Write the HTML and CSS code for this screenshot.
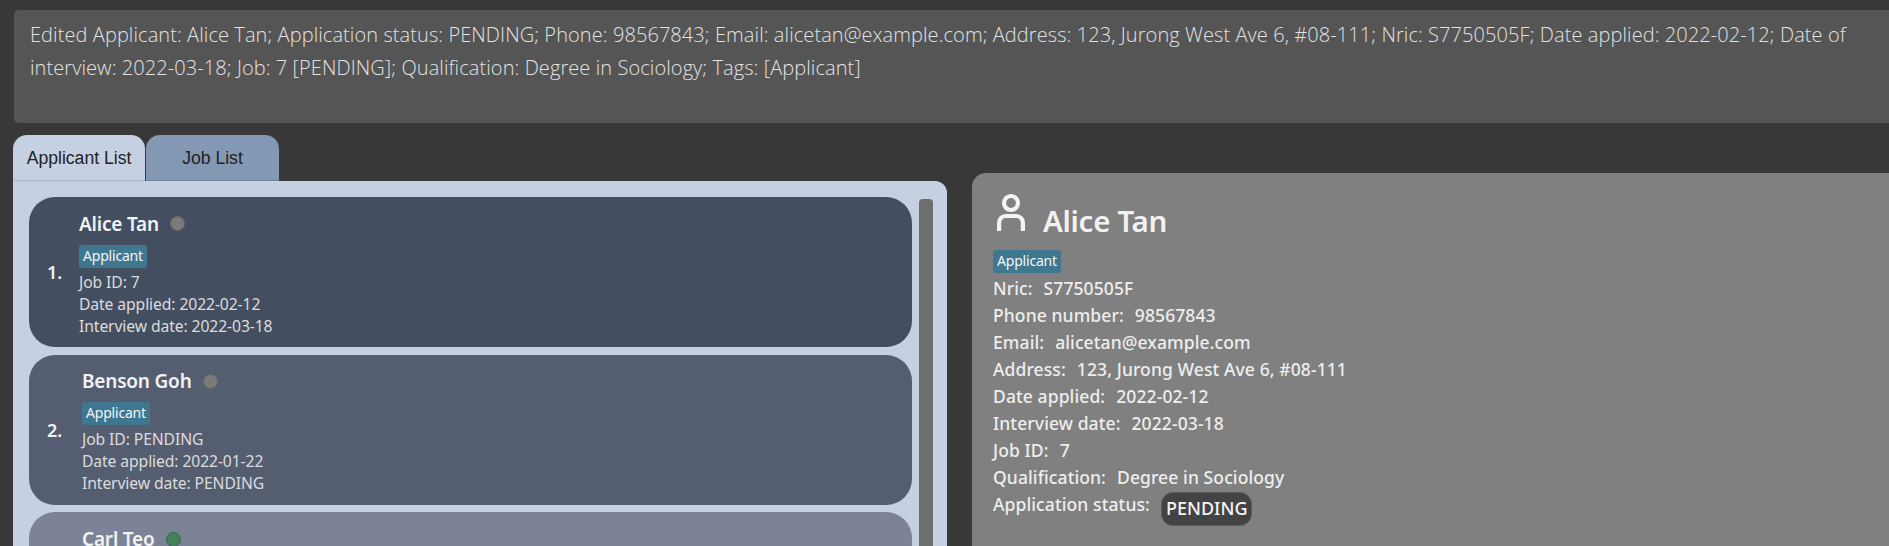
FILE: index.html
```html
<!DOCTYPE html>
<html lang="en">
<head>
<meta charset="utf-8">
<title>Applicant List</title>
<link rel="stylesheet" href="styles.css">
</head>
<body>
<div class="app">
  <div class="result">Edited Applicant: Alice Tan; Application status: PENDING; Phone: 98567843; Email: alicetan@example.com; Address: 123, Jurong West Ave 6, #08-111; Nric: S7750505F; Date applied: 2022-02-12; Date of interview: 2022-03-18; Job: 7 [PENDING]; Qualification: Degree in Sociology; Tags: [Applicant]</div>
  <div class="main">
    <div class="left">
      <div class="tabs">
        <div class="tab tab-active">Applicant List</div>
        <div class="tab">Job List</div>
      </div>
      <div class="panel">
        <div class="cards">
          <div class="card card-a">
            <div class="index">1.</div>
            <div class="info">
              <div class="name-row"><span class="name">Alice Tan</span><span class="dot dot-grey"></span></div>
              <span class="tag">Applicant</span>
              <div class="line">Job ID: 7</div>
              <div class="line">Date applied: 2022-02-12</div>
              <div class="line">Interview date: 2022-03-18</div>
            </div>
          </div>
          <div class="card card-b">
            <div class="index">2.</div>
            <div class="info">
              <div class="name-row"><span class="name">Benson Goh</span><span class="dot dot-grey"></span></div>
              <span class="tag">Applicant</span>
              <div class="line">Job ID: PENDING</div>
              <div class="line">Date applied: 2022-01-22</div>
              <div class="line">Interview date: PENDING</div>
            </div>
          </div>
          <div class="card card-c">
            <div class="index"></div>
            <div class="info">
              <div class="name-row"><span class="name">Carl Teo</span><span class="dot dot-green"></span></div>
            </div>
          </div>
        </div>
        <div class="scrollbar"></div>
      </div>
    </div>
    <div class="detail">
      <div class="detail-head">
        <svg class="person" width="28" height="38" viewBox="0 0 28 38" fill="none" stroke="#f4f4f4" stroke-width="4.200">
          <circle cx="14" cy="10" r="7"></circle>
          <path d="M2.100 38V29.500a6.500 6.500 0 0 1 6.500-6.500h10.800a6.500 6.500 0 0 1 6.500 6.500V38"></path>
        </svg>
        <span class="detail-name">Alice Tan</span>
      </div>
      <span class="tag tag-detail">Applicant</span>
      <div class="row"><span class="key">Nric:</span>S7750505F</div>
      <div class="row"><span class="key">Phone number:</span>98567843</div>
      <div class="row"><span class="key">Email:</span>alicetan@example.com</div>
      <div class="row"><span class="key">Address:</span>123, Jurong West Ave 6, #08-111</div>
      <div class="row"><span class="key">Date applied:</span>2022-02-12</div>
      <div class="row"><span class="key">Interview date:</span>2022-03-18</div>
      <div class="row"><span class="key">Job ID:</span>7</div>
      <div class="row"><span class="key">Qualification:</span>Degree in Sociology</div>
      <div class="status-row"><span class="status-key">Application status:</span><span class="status">PENDING</span></div>
    </div>
  </div>
</div>
</body>
</html>
```
FILE: styles.css
```css
* { box-sizing: border-box; }
html, body { margin: 0; height: 100%; overflow: hidden; }
body { background: #383838; font-family: "Noto Sans", "Open Sans", sans-serif; }
.app { width: 1889px; height: 546px; padding: 10px 0 0 13px; overflow: hidden; }
.result {
  margin-left: 1px; width: 1875px; height: 113px; padding: 8px 20px 0 16px;
  background: #555555; border-radius: 5px 0 0 5px;
  color: #e2e2e2; font-family: "Open Sans", sans-serif; font-weight: 300;
  font-size: 20px; line-height: 33px; letter-spacing: 0.08px;
}
.main { display: flex; margin-top: 12px; }
.left { width: 934px; flex: none; }
.tabs { display: flex; gap: 1px; height: 46px; }
.tab {
  width: 133px; height: 46px; border-radius: 14px 14px 0 0; padding-top: 2px;
  background: #8398b3; border-bottom: 1px solid #6f86a5;
  color: #222; font-family: "Liberation Sans", sans-serif; font-size: 17.600px;
  display: flex; align-items: center; justify-content: center;
}
.tab-active { width: 132px; background: #c5d1e2; border-bottom: 1px solid #a9b6c9; }
.panel {
  display: flex; height: 400px;
  background: #c5d1e2; border-radius: 0 12px 0 0;
  padding: 16px 14px 0 16px;
}
.cards { width: 883px; flex: none; display: flex; flex-direction: column; gap: 7.500px; }
.card {
  flex: none; height: 150px; border-radius: 26px;
  display: flex; align-items: center; color: #fff;
}
.card-a { background: #434e60; padding-left: 18px; }
.card-b { background: #555e71; padding-left: 18px; }
.card-c { background: #7d8396; padding-left: 18px; height: 120px; align-items: flex-start; }
.index { font-size: 18px; font-weight: 600; color: #f2f2f2; width: 32px; flex: none; }
.card-b .index, .card-c .index { width: 35px; }
.info { padding-bottom: 1px; }
.card-c .info { padding-top: 10px; }
.name-row { display: flex; align-items: center; gap: 11px; height: 34px; }
.name { font-size: 19px; font-weight: 600; color: #f2f2f2; letter-spacing: -0.2px; line-height: 30px; }
.dot { width: 15px; height: 15px; border-radius: 50%; }
.dot-grey { background: #7a7a7a; border: 1px solid #666; }
.dot-green { background: #44805a; border: 1px solid #36694a; }
.tag {
  display: inline-block; margin-top: 4px; padding: 0 4px; height: 23px; line-height: 22px;
  background: #3f7690; border-radius: 3px;
  color: #f2f6f8; font-size: 14px; letter-spacing: -0.2px;
}
.line { font-size: 15.700px; line-height: 22px; color: #dcdcdc; letter-spacing: -0.1px; }
.tag + .line { margin-top: 3px; }
.scrollbar { width: 14px; margin-left: 7px; margin-top: 2px; background: #6e6e6e; border-radius: 4px; }
.detail {
  flex: 1; margin-top: 38px; margin-left: 25px; height: 380px;
  background: #808080; border-radius: 14px 0 0 0; padding: 20px 0 0 21px;
  color: #eeeeee; margin-right: -40px;
}
.detail-head { display: flex; align-items: flex-end; gap: 18px; height: 38px; }
.person { margin-left: 4px; }
.detail-name { font-size: 29.500px; font-weight: 600; color: #f2f2f2; line-height: 38px; letter-spacing: -0.3px; margin-bottom: -9px; }
.tag-detail { margin-top: 19px; display: block; width: fit-content; }
.row { font-size: 17.500px; font-weight: 500; line-height: 27px; letter-spacing: 0.1px; }
.tag-detail + .row { margin-top: 2px; }
.key { margin-right: 11px; }
.status-row { display: flex; align-items: flex-start; }
.status-key { font-size: 17.500px; font-weight: 500; line-height: 27px; letter-spacing: 0.1px; margin-right: 11px; }
.status {
  background: #434343; color: #f4f4f4; border-radius: 12px; border: 1px solid #5c5c5c;
  padding: 0 4px; height: 34px; line-height: 31px; font-size: 18px; font-weight: 500; margin-top: 1px;
}
```
